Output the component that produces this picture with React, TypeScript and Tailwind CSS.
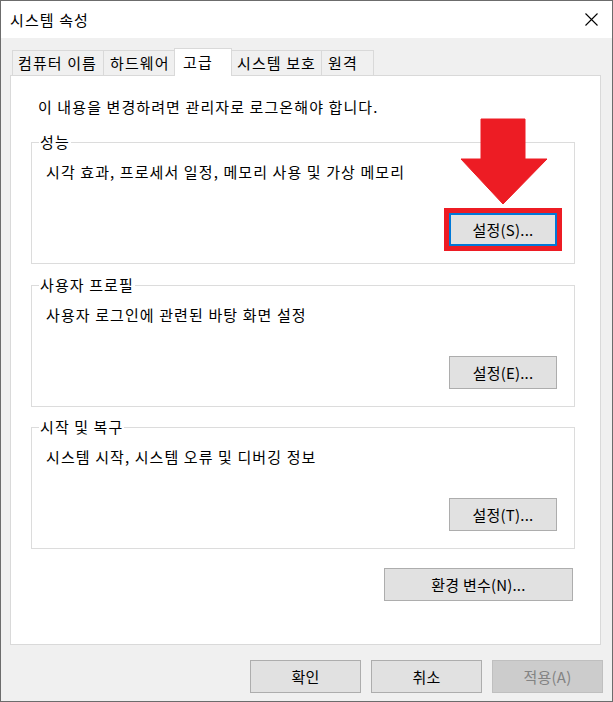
import React from "react";

const btn =
  "flex items-center justify-center h-[33px] border border-[#adadad] bg-[#e1e1e1] text-black leading-[20px] tracking-[0.2px]";

function GroupBox({
  label,
  desc,
  button,
  highlight,
  className,
}: {
  label: string;
  desc: string;
  button: string;
  highlight?: boolean;
  className?: string;
}) {
  return (
    <div className={"flex flex-col border border-[#dcdcdc] pb-[17px] " + (className ?? "")}>
      <div className="-mt-[11px] ml-[7px] w-fit bg-white px-[1px] leading-[20px]">{label}</div>
      <div className="mt-[10px] pl-[14px] leading-[20px]">{desc}</div>
      <div className="mt-[31px] flex justify-end pr-[17px]">
        {highlight ? (
          <div className="w-[108px] h-[33px] flex items-center justify-center border-2 border-[#0078d7] bg-[#e1e1e1] outline-[5px] outline-solid outline-[#ed1c24] leading-[20px] tracking-[0.2px]">
            {button}
          </div>
        ) : (
          <div className={btn + " w-[108px]"}>{button}</div>
        )}
      </div>
    </div>
  );
}

export default function App() {
  return (
    <div className="relative w-[613px] h-[702px] border border-[#6c6c6c] bg-[#f0f0f0] text-[15px] tracking-[1.1px] text-black font-['Noto_Sans_CJK_KR',sans-serif] overflow-hidden">
      {/* Title bar */}
      <div className="flex h-[37px] items-center justify-between bg-white pl-[9px] pr-[14px]">
        <div className="leading-[20px]">시스템 속성</div>
        <svg width="13" height="13" viewBox="0 0 13 13" className="block">
          <path d="M0.5 0.5 L12.5 12.5 M12.5 0.5 L0.5 12.5" stroke="#000" strokeWidth="1.1" fill="none" />
        </svg>
      </div>

      {/* Body */}
      <div className="pl-[9px] pt-[10px]">
        {/* Tabs */}
        <div className="ml-[2px] flex h-[27px] items-end">
          <div className="flex h-[25px] w-[92px] items-center border-x border-t border-[#d9d9d9] pl-[5px] leading-[20px]">
            컴퓨터 이름
          </div>
          <div className="-ml-px flex h-[25px] w-[72px] items-center border-x border-t border-[#d9d9d9] pl-[6px] leading-[20px]">
            하드웨어
          </div>
          <div className="relative z-10 -ml-px -mb-px flex h-[28px] w-[58px] items-start border-x border-t border-[#d9d9d9] bg-white pl-[8px] pt-[3px] leading-[20px]">
            고급
          </div>
          <div className="-ml-px flex h-[25px] w-[91px] items-center border-x border-t border-[#d9d9d9] pl-[5px] leading-[20px]">
            시스템 보호
          </div>
          <div className="-ml-px flex h-[25px] w-[53px] items-center border-x border-t border-[#d9d9d9] pl-[6px] leading-[20px]">
            원격
          </div>
        </div>

        {/* Panel */}
        <div className="flex h-[570px] w-[591px] flex-col border border-[#d9d9d9] bg-white pl-[20px] pr-[25px] pt-[21px]">
          <div className="ml-[7px] leading-[20px]">이 내용을 변경하려면 관리자로 로그온해야 합니다.</div>
          <GroupBox
            className="mt-[25px]"
            label="성능"
            desc="시각 효과, 프로세서 일정, 메모리 사용 및 가상 메모리"
            button="설정(S)..."
            highlight
          />
          <GroupBox
            className="mt-[21px]"
            label="사용자 프로필"
            desc="사용자 로그인에 관련된 바탕 화면 설정"
            button="설정(E)..."
          />
          <GroupBox
            className="mt-[20px]"
            label="시작 및 복구"
            desc="시스템 시작, 시스템 오류 및 디버깅 정보"
            button="설정(T)..."
          />
          <div className="mt-[19px] flex justify-end pr-[2px]">
            <div className={btn + " w-[189px]"}>환경 변수(N)...</div>
          </div>
        </div>

        {/* Bottom buttons */}
        <div className="mt-[15px] flex justify-end gap-[10px] pr-[9px]">
          <div className={btn + " w-[111px]"}>확인</div>
          <div className={btn + " w-[111px]"}>취소</div>
          <div className="flex h-[33px] w-[111px] items-center justify-center border border-[#bfbfbf] bg-[#cccccc] leading-[20px] tracking-[0.2px] text-[#838383]">
            적용(A)
          </div>
        </div>
      </div>

      {/* Red arrow annotation */}
      <svg
        className="absolute left-[459px] top-[117px]"
        width="88"
        height="87"
        viewBox="0 0 88 87"
      >
        <polygon
          points="21,1 65,1 65,41 87,41 43,86 1,41 21,41"
          fill="#ed1c24"
          stroke="#ed1c24"
          strokeWidth="1"
          strokeLinejoin="round"
        />
      </svg>
    </div>
  );
}
